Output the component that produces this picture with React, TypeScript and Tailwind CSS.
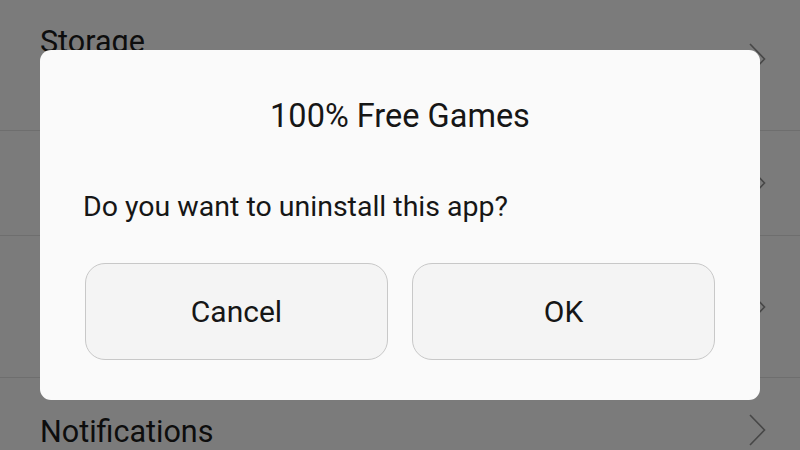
import React from 'react';

interface SettingRow {
  title?: string;
  height: string;
  titleOffset: string;
}

// Only the parts of the list that show around the dialog carry text.
const rows: SettingRow[] = [
  { title: 'Storage', height: 'h-[144px] -mt-[13px]', titleOffset: 'mb-[33px]' },
  { height: 'h-[105px]', titleOffset: '' },
  { height: 'h-[142px]', titleOffset: '' },
  { title: 'Notifications', height: 'h-[105px]', titleOffset: 'mt-[4px]' },
];

function Chevron() {
  return (
    <svg width="17" height="32" viewBox="0 0 17 32" fill="none" className="shrink-0">
      <polyline points="1,1 15.5,16 1,31" stroke="#474747" strokeWidth="1.6" strokeLinejoin="miter" />
    </svg>
  );
}

export default function App() {
  return (
    <div className="relative h-[450px] w-[800px] overflow-hidden bg-[#7b7b7b] font-['Roboto','Liberation_Sans',sans-serif]">
      {/* Settings list behind the dim overlay */}
      <div className="flex flex-col">
        {rows.map((row, i) => (
          <div
            key={i}
            className={`flex items-center justify-between border-b border-[#6e6e6e] pl-10 pr-[34px] ${row.height}`}
          >
            <span className={`text-[30.5px] leading-[36px] text-[#0d0d0d] ${row.titleOffset}`}>{row.title}</span>
            <Chevron />
          </div>
        ))}
      </div>

      {/* Uninstall dialog */}
      <div className="absolute left-[40px] top-[50px] flex h-[350px] w-[720px] flex-col rounded-[11px] bg-[#fafafa] pt-[48px] pb-[40px]">
        <div className="text-center text-[32.5px] leading-[36px] text-[#161616]">100% Free Games</div>
        <div className="mt-[55px] pl-[43px] text-[28.5px] leading-[36px] text-[#161616]">
          Do you want to uninstall this app?
        </div>
        <div className="mt-[38px] flex gap-[24px] px-[45px]">
          <button className="flex h-[97px] flex-1 items-center justify-center rounded-[20px] border border-[#c8c8c8] bg-[#f4f4f4] text-[30px] text-[#161616]">
            Cancel
          </button>
          <button className="flex h-[97px] flex-1 items-center justify-center rounded-[20px] border border-[#c8c8c8] bg-[#f4f4f4] text-[30px] text-[#161616]">
            OK
          </button>
        </div>
      </div>
    </div>
  );
}
